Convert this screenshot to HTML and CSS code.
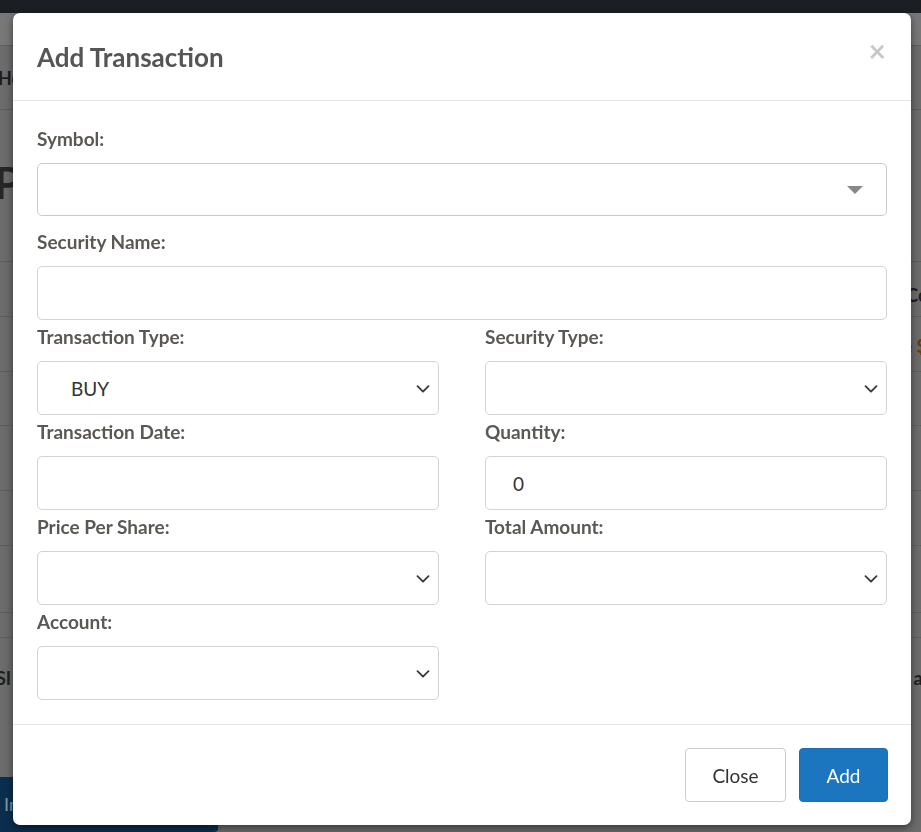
FILE: index.html
```html
<!DOCTYPE html>
<html lang="en">
<head>
<meta charset="utf-8">
<title>Add Transaction</title>
<link rel="stylesheet" href="styles.css">
</head>
<body>
<div class="page">
  <div class="topnav"></div>
  <div class="subnav"></div>
  <div class="crumbs"><span>Holdings</span><span class="crumb-right"></span></div>
  <h1 class="page-title">Portfolio</h1>
  <div class="table">
    <div class="trow tr-a"><span class="lcell"></span><span class="rcell">Price</span></div>
    <div class="trow tr-b"><span class="lcell"></span><span class="rcell">Cost</span></div>
    <div class="trow tr-c"><span class="lcell"></span><span class="rcell rcell-e">e <b>$</b></span></div>
    <div class="trow tr-d"></div>
    <div class="trow tr-e"></div>
    <div class="trow tr-f"></div>
    <div class="trow tr-g"></div>
    <div class="trow tr-g2"></div>
    <div class="trow tr-h"><span class="lcell">SI</span><span class="rcell">al</span></div>
    <div class="trow tr-i"></div>
  </div>
  <div class="bottom-bar"><span class="import-btn">Import</span></div>
</div>

<div class="modal">
  <div class="modal-header">
    <h4 class="modal-title">Add Transaction</h4>
    <span class="close">&times;</span>
  </div>
  <div class="modal-body">
    <div class="field field-symbol">
      <label class="lbl">Symbol:</label>
      <div class="ctrl ctrl-select2">
        <span class="caret"></span>
      </div>
    </div>
    <div class="field">
      <label class="lbl">Security Name:</label>
      <div class="ctrl"></div>
    </div>
    <div class="grid">
      <div class="field">
        <label class="lbl">Transaction Type:</label>
        <div class="ctrl ctrl-select"><span class="val val-select">BUY</span>
          <svg class="chev" viewBox="0 0 14 8" width="14" height="8"><path d="M1.5 1.2l5.5 5.5 5.5-5.5" fill="none" stroke="#343a40" stroke-width="1.8" stroke-linecap="round" stroke-linejoin="round"/></svg>
        </div>
      </div>
      <div class="field">
        <label class="lbl">Security Type:</label>
        <div class="ctrl ctrl-select">
          <svg class="chev" viewBox="0 0 14 8" width="14" height="8"><path d="M1.5 1.2l5.5 5.5 5.5-5.5" fill="none" stroke="#343a40" stroke-width="1.8" stroke-linecap="round" stroke-linejoin="round"/></svg>
        </div>
      </div>
      <div class="field">
        <label class="lbl">Transaction Date:</label>
        <div class="ctrl"></div>
      </div>
      <div class="field">
        <label class="lbl">Quantity:</label>
        <div class="ctrl"><span class="val val-input">0</span></div>
      </div>
      <div class="field">
        <label class="lbl">Price Per Share:</label>
        <div class="ctrl ctrl-select">
          <svg class="chev" viewBox="0 0 14 8" width="14" height="8"><path d="M1.5 1.2l5.5 5.5 5.5-5.5" fill="none" stroke="#343a40" stroke-width="1.8" stroke-linecap="round" stroke-linejoin="round"/></svg>
        </div>
      </div>
      <div class="field">
        <label class="lbl">Total Amount:</label>
        <div class="ctrl ctrl-select">
          <svg class="chev" viewBox="0 0 14 8" width="14" height="8"><path d="M1.5 1.2l5.5 5.5 5.5-5.5" fill="none" stroke="#343a40" stroke-width="1.8" stroke-linecap="round" stroke-linejoin="round"/></svg>
        </div>
      </div>
      <div class="field">
        <label class="lbl">Account:</label>
        <div class="ctrl ctrl-select">
          <svg class="chev" viewBox="0 0 14 8" width="14" height="8"><path d="M1.5 1.2l5.5 5.5 5.5-5.5" fill="none" stroke="#343a40" stroke-width="1.8" stroke-linecap="round" stroke-linejoin="round"/></svg>
        </div>
      </div>
    </div>
  </div>
  <div class="modal-footer">
    <button class="btn btn-default">Close</button>
    <button class="btn btn-primary">Add</button>
  </div>
</div>
</body>
</html>
```
FILE: styles.css
```css
* { box-sizing: border-box; }
html, body { margin: 0; padding: 0; }
body {
  width: 921px;
  height: 832px;
  overflow: hidden;
  background: #6c6c6c;
  font-family: "Lato", "Liberation Sans", sans-serif;
  color: #333;
}

/* dimmed page behind the modal */
.page { width: 921px; height: 832px; display: flex; flex-direction: column; }
.topnav { height: 13px; background: #1b1f23; flex: none; }
.subnav { height: 33px; background: #787878; border-bottom: 1px solid #5f5f5f; flex: none; }
.crumbs {
  height: 64px; flex: none;
  border-bottom: 1px solid #5d5d5d;
  display: flex; align-items: center; justify-content: space-between;
  font-weight: 700; font-size: 18px; color: #1d1d1d;
}
.crumbs span:first-child { margin-left: -2px; }
.page-title {
  margin: 0 0 0 -6px; height: 152px; flex: none;
  font-size: 44px; font-weight: 700; color: #262626;
  padding-top: 50px;
  border-bottom: 1px solid #5d5d5d;
  line-height: 1;
}
.table { display: flex; flex-direction: column; flex: none; }
.trow {
  border-bottom: 1px solid #5e5e5e;
  display: flex; justify-content: space-between; align-items: center;
  font-weight: 700; font-size: 18px; color: #202020;
}
.tr-a { height: 55px; }
.tr-a .rcell { visibility: hidden; }
.tr-b { height: 55px; align-items: flex-start; }
.tr-b .rcell { margin-top: -33px; margin-right: -22px; }
.tr-c { height: 0; border: none; }
.tr-c .rcell-e { margin-top: -52px; margin-right: -6px; color: #3a2a1a; }
.rcell-e b { color: #6b3a0f; }
.tr-d { height: 54px; }
.tr-e { height: 65px; }
.tr-f { height: 55px; }
.tr-g { height: 67px; }
.tr-g2 { height: 25px; }
.tr-h { height: 80px; border-bottom: none; }
.tr-h .lcell { margin-left: -4px; }
.tr-h .rcell { margin-right: -6px; }
.tr-i { height: 0; border-bottom: none; }
.bottom-bar { flex: 1; display: flex; align-items: flex-end; }
.import-btn {
  display: block; width: 218px; height: 55px;
  background: #0c2e4e; color: #8a9aa9;
  font-size: 18px; line-height: 55px; padding-left: 4px;
  border-radius: 0 0 4px 0;
}

/* modal */
.modal {
  position: fixed;
  top: 13px; left: 13px;
  width: 898px; height: 812px;
  background: #fff;
  border-radius: 7px;
  box-shadow: 0 3px 9px rgba(0,0,0,.5);
  display: flex; flex-direction: column;
}
.modal-header {
  height: 88px; flex: none;
  border-bottom: 1px solid #e5e5e5;
  display: flex; align-items: flex-start; justify-content: space-between;
  padding: 0 24px;
}
.modal-title {
  margin: 28px 0 0;
  font-size: 26px; line-height: 32px; font-weight: 700;
  color: #555;
}
.close {
  margin-top: 22px; margin-right: 1px;
  font-size: 30px; line-height: 30px; font-weight: 700;
  color: #000; opacity: .22;
}
.modal-body { padding: 26px 24px 0; flex: 1; }
.field { display: flex; flex-direction: column; margin-bottom: 5px; }
.field-symbol { margin-bottom: 14px; }
.lbl {
  font-size: 19px; line-height: 24px; font-weight: 700; color: #5b5753;
  margin-bottom: 12px;
}
.ctrl {
  height: 54px;
  border: 1px solid #d3d3d3;
  border-radius: 5px;
  display: flex; align-items: center;
  position: relative;
  background: #fff;
}
.ctrl-select2 { height: 53px; border-color: #cacaca; }
.caret {
  position: absolute; right: 23px; top: 22px;
  width: 0; height: 0;
  border-left: 8px solid transparent;
  border-right: 8px solid transparent;
  border-top: 8px solid #888;
}
.chev { position: absolute; right: 8px; top: 23px; }
.val { font-size: 19px; color: #333; }
.val-select { padding-left: 33px; }
.val-input { padding-left: 27px; }
.grid { display: grid; grid-template-columns: 402px 402px; column-gap: 46px; }
.modal-footer {
  height: 101px; flex: none;
  border-top: 1px solid #e5e5e5;
  display: flex; justify-content: flex-end; align-items: flex-start;
  padding: 23px 23px 0 24px;
  gap: 13px;
}
.btn {
  height: 54px;
  font-family: inherit; font-size: 19px;
  border-radius: 4px; border: 1px solid transparent;
  padding: 0;
}
.btn-default { width: 101px; background: #fff; border-color: #ccc; color: #333; }
.btn-primary { width: 89px; background: #1b75bf; border-color: #1b6fb5; color: #fff; }
```
